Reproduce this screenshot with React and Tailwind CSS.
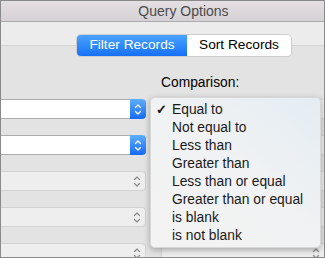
const options = [
    'Equal to',
    'Not equal to',
    'Less than',
    'Greater than',
    'Less than or equal',
    'Greater than or equal',
    'is blank',
    'is not blank',
];

// Up/down chevrons used by the popup buttons
const Chevrons = ({ color }) => (
    <svg width="8" height="13" viewBox="0 0 8 13" fill="none" stroke={color} strokeWidth="1.3" strokeLinecap="round" strokeLinejoin="round">
        <path d="M1.5 4.5 L4 2 L6.5 4.5" />
        <path d="M1.5 8.5 L4 11 L6.5 8.5" />
    </svg>
);

const BluePopup = () => (
    <div className="flex h-[20px]">
        <div className="flex-1 bg-white border-y border-[#acacac]" />
        <div className="w-[16px] rounded-r-[4px] bg-gradient-to-b from-[#5eaefe] to-[#1469f4] flex items-center justify-center">
            <Chevrons color="#ffffff" />
        </div>
    </div>
);

const GrayPopup = ({ rounded = 'rounded-r-[4px]', border = 'border-y border-r' }) => (
    <div className={`h-[20px] flex items-center justify-end pr-[4px] bg-[#eeeeee] border-[#d3d3d3] ${border} ${rounded}`}>
        <Chevrons color="#8e8e8e" />
    </div>
);

const App = () => {
    return (
        <div className="w-[325px] h-[258px] border border-[#8a8a8a] overflow-hidden flex flex-col font-['Liberation_Sans',Arial,sans-serif]">
            {/* Title bar */}
            <div className="h-[21px] shrink-0 bg-gradient-to-b from-[#e3dfe3] to-[#d5d1d5] border-b border-[#acaaac] flex items-center justify-center pl-[42px]">
                <span className="text-[14px] text-[#4b4b4b]">Query Options</span>
            </div>

            {/* Toolbar with segmented control */}
            <div className="h-[24px] shrink-0 bg-[#ececec] border-b border-[#d3d3d3] relative">
                <div className="absolute left-[76px] top-[13px] z-10 flex h-[21px] w-[214px] rounded-[4px] overflow-hidden shadow-[0_0_0_1px_#cdcdcd] text-[13.7px]">
                    <div className="w-[110px] bg-gradient-to-b from-[#4aa3fe] to-[#1670f5] text-white flex items-center justify-center">
                        Filter Records
                    </div>
                    <div className="flex-1 bg-white text-black flex items-center justify-center">
                        Sort Records
                    </div>
                </div>
            </div>

            {/* Content */}
            <div className="flex-1 bg-[#e3e3e3] relative flex gap-[15px]">
                <div className="w-[145px] pt-[53px] flex flex-col gap-[16px]">
                    <BluePopup />
                    <BluePopup />
                    <GrayPopup />
                    <GrayPopup />
                    <GrayPopup />
                </div>
                <div className="flex-1 pt-[29px]">
                    <div className="h-[16px] leading-[16px] text-[13.8px] text-black">Comparison:</div>
                    <div className="mt-[8px] flex flex-col gap-[16px]">
                        <GrayPopup rounded="rounded-l-[4px]" border="border-y border-l" />
                        <GrayPopup rounded="rounded-l-[4px]" border="border-y border-l" />
                        <GrayPopup rounded="rounded-l-[4px]" border="border-y border-l" />
                        <GrayPopup rounded="rounded-l-[4px]" border="border-y border-l" />
                        <GrayPopup rounded="rounded-l-[4px]" border="border-y border-l" />
                    </div>
                </div>

                {/* Open comparison menu */}
                <div className="absolute left-[149px] top-[51px] w-[171px] h-[151px] rounded-[5px] bg-gradient-to-tr from-[#f3f3f3] via-[#f1f2f3] to-[#e4edf3] border border-[#d8d8d8] shadow-[0_2px_6px_rgba(0,0,0,0.3)] pt-[3px] text-[13.8px] text-[#1a1a1a]">
                    {options.map((option, i) => (
                        <div key={option} className="h-[18px] flex items-center">
                            <span className="w-[21px] pl-[5px] text-[13px] font-bold">{i === 0 ? '✓' : ''}</span>
                            <span>{option}</span>
                        </div>
                    ))}
                </div>
            </div>
        </div>
    );
};

export default App;
